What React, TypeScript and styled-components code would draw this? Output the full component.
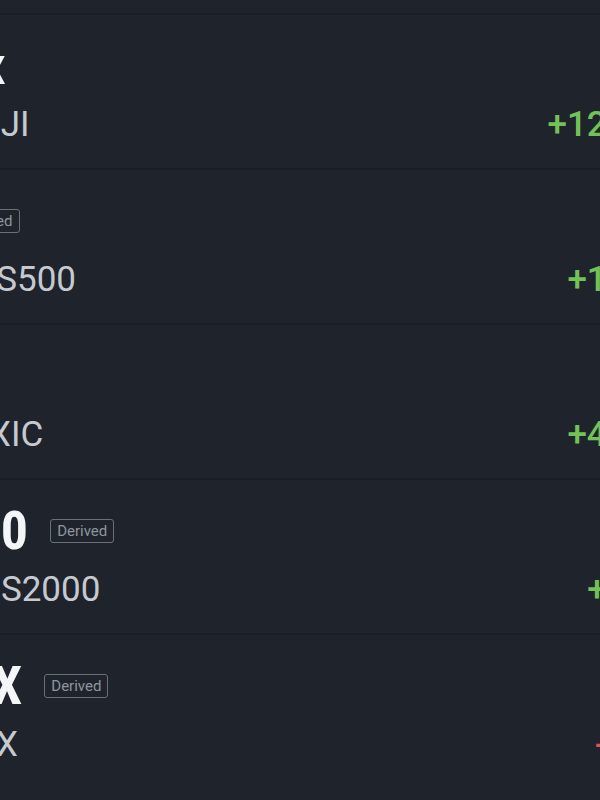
import React from "react";
import styled, { createGlobalStyle } from "styled-components";

const GlobalStyle = createGlobalStyle`
  html, body {
    margin: 0;
    padding: 0;
    background: #1f242c;
  }
  body {
    font-family: Roboto, "Noto Sans", "Liberation Sans", sans-serif;
  }
`;

const Viewport = styled.div`
  width: 600px;
  height: 800px;
  overflow: hidden;
  background: #1f242c;
  padding-top: 13px;
  box-sizing: border-box;
`;

const List = styled.ul`
  list-style: none;
  margin: 0 0 0 -252px;
  padding: 0;
  width: 934px;
`;

const Row = styled.li`
  box-sizing: border-box;
  height: 155px;
  border-top: 2px solid #1a1e25;
  padding: 23px 0 0 0;
  display: grid;
  grid-template-columns: 1fr auto;
  grid-template-rows: 56px 42px;
  row-gap: 10px;
  align-items: center;
`;

const TitleLine = styled.div`
  display: flex;
  align-items: center;
  gap: 22px;
  grid-column: 1 / 3;
`;

const Title = styled.span`
  font-family: "Liberation Sans Narrow", "Arial Narrow", Roboto, sans-serif;
  font-stretch: condensed;
  font-size: 54px;
  line-height: 56px;
  font-weight: 700;
  color: #f4f5f7;
  white-space: nowrap;
`;

const Badge = styled.span`
  font-size: 15px;
  line-height: 18px;
  color: #8e949d;
  border: 1px solid #6a707a;
  border-radius: 3px;
  padding: 2px 6px;
  white-space: nowrap;
`;

const Sub = styled.span`
  font-size: 35px;
  line-height: 42px;
  color: #c6cad0;
  white-space: nowrap;
`;

const Change = styled.span<{ $up: boolean }>`
  font-size: 35px;
  line-height: 42px;
  font-weight: 500;
  color: ${(p) => (p.$up ? "#72c257" : "#e0524f")};
  text-align: right;
  white-space: nowrap;
`;

type Market = {
  title: string;
  sub: string;
  derived: boolean;
  change: string;
};

const markets: Market[] = [
  { title: "US 30 Index", sub: "Dow Jones 30 DJI", derived: false, change: "+12.45%" },
  { title: "S&P 500", sub: "S&P500 Index US500", derived: true, change: "+1.32%" },
  { title: "Nasdaq", sub: "Nasdaq Comp IXIC", derived: false, change: "+4.18%" },
  { title: "Russell 2000", sub: "Russell 2000 RUS2000", derived: true, change: "+2.7%" },
  { title: "S&P 500 VIX", sub: "S&P Volatility VIX", derived: true, change: "-0.3%" },
];

export default function App() {
  return (
    <>
      <GlobalStyle />
      <Viewport>
        <List>
          {markets.map((m) => (
            <Row key={m.title}>
              <TitleLine>
                <Title>{m.title}</Title>
                {m.derived && <Badge>Derived</Badge>}
              </TitleLine>
              <Sub>{m.sub}</Sub>
              <Change $up={m.change.startsWith("+")}>{m.change}</Change>
            </Row>
          ))}
        </List>
      </Viewport>
    </>
  );
}
